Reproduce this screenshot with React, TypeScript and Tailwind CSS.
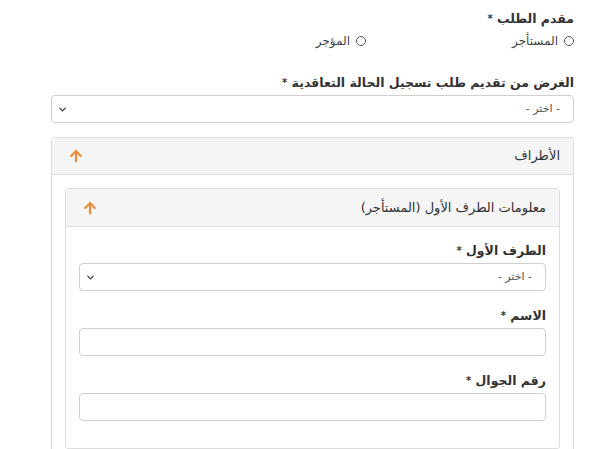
import { ChevronDown } from 'lucide-react';
import { FaArrowUp } from 'react-icons/fa';

function Label({ text }: { text: string }) {
  return (
    <label className="block h-[18px] leading-[18px] mb-[3px] text-[12.5px] font-bold text-[#333]">
      {text} <span className="text-[10px] align-top">*</span>
    </label>
  );
}

function SelectBox() {
  return (
    <div className="h-[28px] border border-[#cfcfcf] rounded-[4px] bg-white flex items-center justify-between pr-[13px] pl-[5px] text-[11px] text-[#555]">
      <span>- اختر -</span>
      <ChevronDown size={11} strokeWidth={3} className="text-[#444]" />
    </div>
  );
}

function TextBox() {
  return <div className="h-[28px] border border-[#cfcfcf] rounded-[4px] bg-white" />;
}

function Radio({ text }: { text: string }) {
  return (
    <div className="flex items-center gap-[6px] text-[12px] text-[#444]">
      <span className="w-[10px] h-[10px] rounded-full border border-[#555] bg-white" />
      <span>{text}</span>
    </div>
  );
}

function PanelHeader({ title }: { title: string }) {
  return (
    <div className="h-full flex items-center justify-between bg-[#f5f5f5] border-b border-[#e0e0e0] px-[13px] text-[13px] text-[#333]">
      <span>{title}</span>
      <FaArrowUp size={14} className="text-[#ef8a35] ml-[4px]" />
    </div>
  );
}

export default function App() {
  return (
    <div dir="rtl" className="w-[600px] h-[449px] overflow-hidden bg-white" style={{ fontFamily: '"DejaVu Sans", sans-serif' }}>
      <div className="w-[523px] mr-[26px] pt-[10px]">
        <Label text="مقدم الطلب" />
        <div className="flex items-center h-[18px] mt-[4px]">
          <div className="w-[208px]">
            <Radio text="المستأجر" />
          </div>
          <Radio text="المؤجر" />
        </div>

        <div className="mt-[24px]">
          <Label text="الغرض من تقديم طلب تسجيل الحالة التعاقدية" />
          <SelectBox />
        </div>

        <div className="mt-[14px] border border-[#ddd] rounded-[3px]">
          <div className="h-[37px]">
            <PanelHeader title="الأطراف" />
          </div>
          <div className="px-[13px] pt-[13px] pb-[13px]">
            <div className="border border-[#ddd] rounded-[3px]">
              <div className="h-[38px]">
                <PanelHeader title="معلومات الطرف الأول (المستأجر)" />
              </div>
              <div className="px-[13px] pt-[15px] pb-[11px]">
                <div className="mb-[16px]">
                  <Label text="الطرف الأول" />
                  <SelectBox />
                </div>
                <div className="mb-[16px]">
                  <Label text="الاسم" />
                  <TextBox />
                </div>
                <div className="mb-[16px]">
                  <Label text="رقم الجوال" />
                  <TextBox />
                </div>
              </div>
            </div>
          </div>
        </div>
      </div>
    </div>
  );
}
